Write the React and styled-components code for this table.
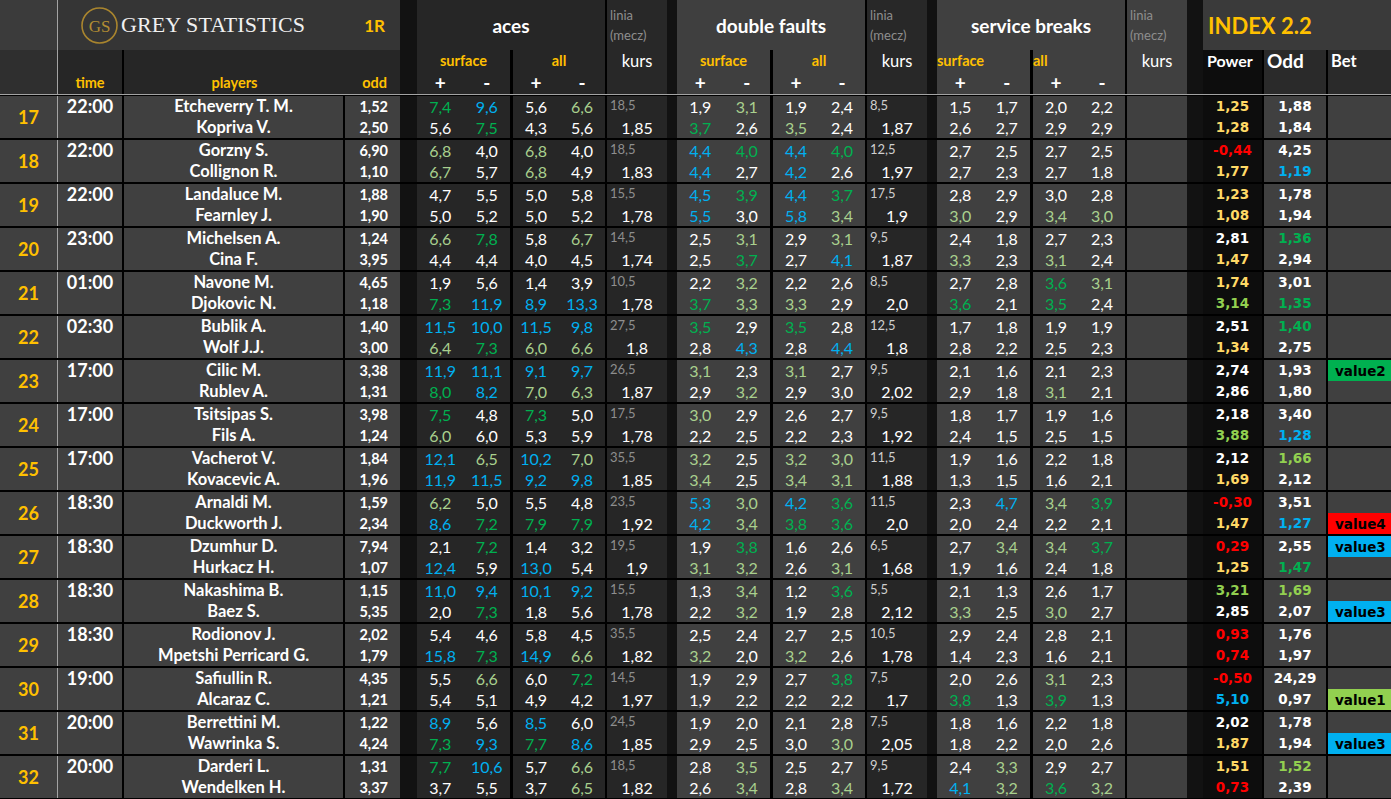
import React from 'react';
import styled, { createGlobalStyle } from 'styled-components';

const COLS =
  '58px 66px 221px 55px 17px 96px 94px 60px 10px 96px 94px 60px 10px 96px 94px 60px 16px 61px 64px 63px';

const C = {
  w: '#ffffff',
  g: '#00b050',
  l: '#a9d08e',
  b: '#00b0f0',
  y: '#ffd966',
  r: '#ff0000',
  m: '#92d050',
};

// "7,4g" -> { v: '7,4', c: green }
const parse = str =>
  str.split(' ').map(t => {
    const m = t.match(/^(-?[\d,]+)([a-z]?)$/);
    return { v: m[1], c: C[m[2] || 'w'] };
  });

const matches = [
  { n: 17, t: '22:00', p: ['Etcheverry T. M.', 'Kopriva V.'], o: ['1,52', '2,50'],
    a: ['7,4g 9,6b 5,6 6,6l', '5,6 7,5g 4,3 5,6'], al: ['18,5', '1,85'],
    d: ['1,9 3,1l 1,9 2,4', '3,7g 2,6 3,5l 2,4'], dl: ['8,5', '1,87'],
    s: ['1,5 1,7 2,0 2,2', '2,6 2,7 2,9 2,9'], pw: '1,25y 1,28y', od: '1,88 1,84' },
  { n: 18, t: '22:00', p: ['Gorzny S.', 'Collignon R.'], o: ['6,90', '1,10'],
    a: ['6,8l 4,0 6,8l 4,0', '6,7l 5,7 6,8l 4,9'], al: ['18,5', '1,83'],
    d: ['4,4b 4,0g 4,4b 4,0g', '4,4b 2,7 4,2b 2,6'], dl: ['12,5', '1,97'],
    s: ['2,7 2,5 2,7 2,5', '2,7 2,3 2,7 1,8'], pw: '-0,44r 1,77y', od: '4,25 1,19b' },
  { n: 19, t: '22:00', p: ['Landaluce M.', 'Fearnley J.'], o: ['1,88', '1,90'],
    a: ['4,7 5,5 5,0 5,8', '5,0 5,2 5,0 5,2'], al: ['15,5', '1,78'],
    d: ['4,5b 3,9g 4,4b 3,7g', '5,5b 3,0 5,8b 3,4l'], dl: ['17,5', '1,9'],
    s: ['2,8 2,9 3,0 2,8', '3,0l 2,9 3,4l 3,0l'], pw: '1,23y 1,08y', od: '1,78 1,94' },
  { n: 20, t: '23:00', p: ['Michelsen A.', 'Cina F.'], o: ['1,24', '3,95'],
    a: ['6,6l 7,8g 5,8 6,7l', '4,4 4,4 4,0 4,5'], al: ['14,5', '1,74'],
    d: ['2,5 3,1l 2,9 3,1l', '2,5 3,7g 2,7 4,1b'], dl: ['9,5', '1,87'],
    s: ['2,4 1,8 2,7 2,3', '3,3l 2,3 3,1l 2,4'], pw: '2,81 1,47y', od: '1,36g 2,94' },
  { n: 21, t: '01:00', p: ['Navone M.', 'Djokovic N.'], o: ['4,65', '1,18'],
    a: ['1,9 5,6 1,4 3,9', '7,3g 11,9b 8,9b 13,3b'], al: ['10,5', '1,78'],
    d: ['2,2 3,2l 2,2 2,6', '3,7g 3,3l 3,3l 2,9'], dl: ['8,5', '2,0'],
    s: ['2,7 2,8 3,6g 3,1l', '3,6g 2,1 3,5g 2,4'], pw: '1,74y 3,14m', od: '3,01 1,35g' },
  { n: 22, t: '02:30', p: ['Bublik A.', 'Wolf J.J.'], o: ['1,40', '3,00'],
    a: ['11,5b 10,0b 11,5b 9,8b', '6,4l 7,3g 6,0l 6,6l'], al: ['27,5', '1,8'],
    d: ['3,5g 2,9 3,5g 2,8', '2,8 4,3b 2,8 4,4b'], dl: ['12,5', '1,8'],
    s: ['1,7 1,8 1,9 1,9', '2,8 2,2 2,5 2,3'], pw: '2,51 1,34y', od: '1,40g 2,75' },
  { n: 23, t: '17:00', p: ['Cilic M.', 'Rublev A.'], o: ['3,38', '1,31'],
    a: ['11,9b 11,1b 9,1b 9,7b', '8,0g 8,2b 7,0l 6,3l'], al: ['26,5', '1,87'],
    d: ['3,1l 2,3 3,1l 2,7', '2,9 3,2l 2,9 3,0'], dl: ['9,5', '2,02'],
    s: ['2,1 1,6 2,1 2,3', '2,9 1,8 3,1l 2,1'], pw: '2,74 2,86', od: '1,93 1,80',
    bet: [['value2', '#00b050'], null] },
  { n: 24, t: '17:00', p: ['Tsitsipas S.', 'Fils A.'], o: ['3,98', '1,24'],
    a: ['7,5g 4,8 7,3g 5,0', '6,0l 6,0 5,3 5,9'], al: ['17,5', '1,78'],
    d: ['3,0l 2,9 2,6 2,7', '2,2 2,5 2,2 2,3'], dl: ['9,5', '1,92'],
    s: ['1,8 1,7 1,9 1,6', '2,4 1,5 2,5 1,5'], pw: '2,18 3,88m', od: '3,40 1,28b' },
  { n: 25, t: '17:00', p: ['Vacherot V.', 'Kovacevic A.'], o: ['1,84', '1,96'],
    a: ['12,1b 6,5l 10,2b 7,0l', '11,9b 11,5b 9,2b 9,8b'], al: ['35,5', '1,85'],
    d: ['3,2l 2,5 3,2l 3,0l', '3,4l 2,5 3,4l 3,1l'], dl: ['11,5', '1,88'],
    s: ['1,9 1,6 2,2 1,8', '1,3 1,5 1,6 2,1'], pw: '2,12 1,69y', od: '1,66m 2,12' },
  { n: 26, t: '18:30', p: ['Arnaldi M.', 'Duckworth J.'], o: ['1,59', '2,34'],
    a: ['6,2l 5,0 5,5 4,8', '8,6b 7,2g 7,9g 7,9g'], al: ['23,5', '1,92'],
    d: ['5,3b 3,0l 4,2b 3,6g', '4,2b 3,4l 3,8g 3,6g'], dl: ['11,5', '2,0'],
    s: ['2,3 4,7b 3,4l 3,9g', '2,0 2,4 2,2 2,1'], pw: '-0,30r 1,47y', od: '3,51 1,27b',
    bet: [null, ['value4', '#ff0000']] },
  { n: 27, t: '18:30', p: ['Dzumhur D.', 'Hurkacz H.'], o: ['7,94', '1,07'],
    a: ['2,1 7,2g 1,4 3,2', '12,4b 5,9 13,0b 5,4'], al: ['19,5', '1,9'],
    d: ['1,9 3,8g 1,6 2,6', '3,1l 3,2l 2,6 3,1l'], dl: ['6,5', '1,68'],
    s: ['2,7 3,4l 3,4l 3,7g', '1,9 1,6 2,4 1,8'], pw: '0,29r 1,25y', od: '2,55 1,47g',
    bet: [['value3', '#00b0f0'], null] },
  { n: 28, t: '18:30', p: ['Nakashima B.', 'Baez S.'], o: ['1,15', '5,35'],
    a: ['11,0b 9,4b 10,1b 9,2b', '2,0 7,3g 1,8 5,6'], al: ['15,5', '1,78'],
    d: ['1,3 3,4l 1,2 3,6g', '2,2 3,2l 1,9 2,8'], dl: ['5,5', '2,12'],
    s: ['2,1 1,3 2,6 1,7', '3,3l 2,5 3,0l 2,7'], pw: '3,21m 2,85', od: '1,69m 2,07',
    bet: [null, ['value3', '#00b0f0']] },
  { n: 29, t: '18:30', p: ['Rodionov J.', 'Mpetshi Perricard G.'], o: ['2,02', '1,79'],
    a: ['5,4 4,6 5,8 4,5', '15,8b 7,3g 14,9b 6,6l'], al: ['35,5', '1,82'],
    d: ['2,5 2,4 2,7 2,5', '3,2l 2,0 3,2l 2,6'], dl: ['10,5', '1,78'],
    s: ['2,9 2,4 2,8 2,1', '1,4 2,3 1,6 2,1'], pw: '0,93r 0,74r', od: '1,76 1,97' },
  { n: 30, t: '19:00', p: ['Safiullin R.', 'Alcaraz C.'], o: ['4,35', '1,21'],
    a: ['5,5 6,6l 6,0 7,2g', '5,4 5,1 4,9 4,2'], al: ['14,5', '1,97'],
    d: ['1,9 2,9 2,7 3,8g', '1,9 2,2 2,2 2,2'], dl: ['7,5', '1,7'],
    s: ['2,0 2,6 3,1l 2,3', '3,8g 1,3 3,9g 1,3'], pw: '-0,50r 5,10b', od: '24,29 0,97',
    bet: [null, ['value1', '#92d050']] },
  { n: 31, t: '20:00', p: ['Berrettini M.', 'Wawrinka S.'], o: ['1,22', '4,24'],
    a: ['8,9b 5,6 8,5b 6,0', '7,3g 9,3b 7,7g 8,6b'], al: ['24,5', '1,85'],
    d: ['1,9 2,0 2,1 2,8', '2,9 2,5 3,0 3,0l'], dl: ['7,5', '2,05'],
    s: ['1,8 1,6 2,2 1,8', '1,8 2,2 2,0 2,6'], pw: '2,02 1,87y', od: '1,78 1,94',
    bet: [null, ['value3', '#00b0f0']] },
  { n: 32, t: '20:00', p: ['Darderi L.', 'Wendelken H.'], o: ['1,31', '3,37'],
    a: ['7,7g 10,6b 5,7 6,6l', '3,7 5,5 3,7 6,5l'], al: ['18,5', '1,82'],
    d: ['2,8 3,5l 2,5 2,7', '2,6 3,4l 2,8 3,4l'], dl: ['9,5', '1,72'],
    s: ['2,4 3,3l 2,9 2,7', '4,1b 3,2l 3,6g 3,2l'], pw: '1,51y 0,73r', od: '1,52m 2,39' },
];

const GlobalStyle = createGlobalStyle`
  html, body {
    margin: 0;
    padding: 0;
    overflow: hidden;
    background: #000;
  }
`;

const Sheet = styled.div`
  width: 1391px;
  height: 799px;
  overflow: hidden;
  background: #000;
  font-family: Lato, 'Liberation Sans', sans-serif;
  color: #fff;
`;

/* ---------- header ---------- */

const HeadGrid = styled.div`
  display: grid;
  grid-template-columns: ${COLS};
  grid-template-rows: 50px 22px 22px;
  border-bottom: 1px solid #a3a3a3;
`;

const HeadCell = styled.div`
  grid-column: ${p => p.$col};
  grid-row: ${p => p.$row};
  background: ${p => p.$bg || '#262626'};
  display: flex;
  align-items: ${p => p.$v || 'center'};
  justify-content: ${p => p.$h || 'center'};
  padding: ${p => p.$pad || '0'};
  border-right: ${p => (p.$edge ? `${p.$edge}px solid #000` : 'none')};
  box-sizing: border-box;
  overflow: hidden;
  white-space: nowrap;
`;

const NumHead = styled(HeadCell)`
  border-right: 1px solid #a3a3a3;
`;

const LogoCell = styled(HeadCell)`
  justify-content: space-between;
  padding: 0 15px 0 23px;
`;

const Brand = styled.div`
  display: flex;
  align-items: center;
  gap: 3px;
`;

const BrandName = styled.span`
  font-family: 'Liberation Serif', 'DejaVu Serif', serif;
  font-size: 22px;
  letter-spacing: 0.1px;
  color: #f0f0f0;
`;

const Round = styled.span`
  font-size: 17px;
  font-weight: 700;
  color: #ffc000;
`;

const GroupTitle = styled.span`
  font-size: 19px;
  font-weight: 700;
  color: #fff;
`;

const IndexTitle = styled.span`
  font-size: 22px;
  font-weight: 700;
  color: #ffc000;
`;

const YellowLabel = styled.span`
  font-size: 14.5px;
  font-weight: 700;
  line-height: 22px;
  color: #ffc000;
`;

const WhiteLabel = styled.span`
  font-size: ${p => p.$size || 16}px;
  font-weight: 700;
  line-height: 22px;
  color: #fff;
`;

const Signs = styled.div`
  display: grid;
  grid-template-columns: 1fr 1fr;
  width: 100%;
  font-size: 19px;
  font-weight: 700;
  line-height: 22px;
  text-align: center;
  color: #fff;
`;

const LiniaHead = styled.div`
  grid-column: ${p => p.$col};
  grid-row: 1 / 4;
  background: ${p => p.$bg};
  display: flex;
  flex-direction: column;
  padding-top: 5px;
  box-sizing: border-box;
`;

const LiniaLabel = styled.span`
  font-size: 13px;
  line-height: 20px;
  padding-left: 3px;
  color: #8e8e8e;
`;

const Kurs = styled.span`
  margin-top: 5px;
  font-size: 16.5px;
  line-height: 22px;
  text-align: center;
  color: #fff;
`;

const Sep = styled.div`
  grid-column: ${p => p.$col};
  grid-row: 1 / 4;
  background: #121212;
`;

const Logo = () => (
  <svg width="37" height="37" viewBox="0 0 37 37">
    <circle cx="18.5" cy="18.5" r="17.5" fill="none" stroke="#a9852e" strokeWidth="1.6" />
    <text
      x="18.5"
      y="24.5"
      textAnchor="middle"
      fontFamily="Liberation Serif, serif"
      fontSize="17"
      fill="#b38d33"
    >
      GS
    </text>
  </svg>
);

const StatHead = ({ from, title, bg, leftLabels }) => (
  <>
    <HeadCell $col={`${from} / ${from + 2}`} $row="1" $bg={bg} $edge={2}>
      <GroupTitle>{title}</GroupTitle>
    </HeadCell>
    <HeadCell
      $col={from}
      $row="2"
      $bg={bg}
      $edge={3}
      $h={leftLabels ? 'flex-start' : 'center'}
    >
      <YellowLabel>surface</YellowLabel>
    </HeadCell>
    <HeadCell
      $col={from + 1}
      $row="2"
      $bg={bg}
      $edge={2}
      $h={leftLabels ? 'flex-start' : 'center'}
    >
      <YellowLabel>all</YellowLabel>
    </HeadCell>
    <HeadCell $col={from} $row="3" $bg={bg} $edge={3}>
      <Signs>
        <span>+</span>
        <span>-</span>
      </Signs>
    </HeadCell>
    <HeadCell $col={from + 1} $row="3" $bg={bg} $edge={2}>
      <Signs>
        <span>+</span>
        <span>-</span>
      </Signs>
    </HeadCell>
  </>
);

const Header = () => (
  <HeadGrid>
    <NumHead $col="1" $row="1" $bg="#3b3b3b" />
    <NumHead $col="1" $row="2 / 4" $bg="#2f2f2f" />
    <LogoCell $col="2 / 5" $row="1" $bg="#353535">
      <Brand>
        <Logo />
        <BrandName>GREY STATISTICS</BrandName>
      </Brand>
      <Round>1R</Round>
    </LogoCell>
    <HeadCell $col="2" $row="2 / 4" $v="flex-end" $edge={2}>
      <YellowLabel>time</YellowLabel>
    </HeadCell>
    <HeadCell $col="3" $row="2 / 4" $v="flex-end">
      <YellowLabel>players</YellowLabel>
    </HeadCell>
    <HeadCell $col="4" $row="2 / 4" $v="flex-end" $h="flex-end" $pad="0 13px 0 0">
      <YellowLabel>odd</YellowLabel>
    </HeadCell>
    <Sep $col="5" />

    <StatHead from={6} title="aces" bg="#262626" />
    <LiniaHead $col="8" $bg="#282828">
      <LiniaLabel>linia</LiniaLabel>
      <LiniaLabel>(mecz)</LiniaLabel>
      <Kurs>kurs</Kurs>
    </LiniaHead>
    <Sep $col="9" />

    <StatHead from={10} title="double faults" bg="#3f3f3f" />
    <LiniaHead $col="12" $bg="#282828">
      <LiniaLabel>linia</LiniaLabel>
      <LiniaLabel>(mecz)</LiniaLabel>
      <Kurs>kurs</Kurs>
    </LiniaHead>
    <Sep $col="13" />

    <StatHead from={14} title="service breaks" bg="#404040" leftLabels />
    <LiniaHead $col="16" $bg="#404040">
      <LiniaLabel>linia</LiniaLabel>
      <LiniaLabel>(mecz)</LiniaLabel>
      <Kurs>kurs</Kurs>
    </LiniaHead>
    <Sep $col="17" />

    <HeadCell $col="18 / 21" $row="1" $bg="#3a3a3a" $h="flex-start" $pad="0 0 0 5px">
      <IndexTitle>INDEX 2.2</IndexTitle>
    </HeadCell>
    <HeadCell $col="18" $row="2 / 4" $bg="#0d0d0d" $v="flex-start" $h="flex-start" $pad="0 0 0 4px" $edge={2}>
      <WhiteLabel>Power</WhiteLabel>
    </HeadCell>
    <HeadCell $col="19" $row="2 / 4" $bg="#2a2a2a" $v="flex-start" $h="flex-start" $pad="0 0 0 3px" $edge={2}>
      <WhiteLabel $size={19}>Odd</WhiteLabel>
    </HeadCell>
    <HeadCell $col="20" $row="2 / 4" $bg="#2a2a2a" $v="flex-start" $h="flex-start" $pad="0 0 0 3px">
      <WhiteLabel $size={16.5}>Bet</WhiteLabel>
    </HeadCell>
  </HeadGrid>
);

/* ---------- body ---------- */

const Body = styled.div`
  border-top: 1px solid #000;
`;

const MatchRow = styled.div`
  display: grid;
  grid-template-columns: ${COLS};
  height: 44px;
  box-sizing: border-box;
  border-bottom: 2px solid #000;
  background: #000;
`;

const NumCell = styled.div`
  background: #404040;
  border-right: 1px solid #a3a3a3;
  display: flex;
  align-items: center;
  justify-content: center;
  font-size: 18px;
  font-weight: 700;
  color: #ffc000;
`;

const TimeCell = styled.div`
  background: #404040;
  border-right: 2px solid #000;
  text-align: center;
  font-size: 18px;
  font-weight: 700;
  line-height: 21px;
  color: #fff;
`;

const TwoLines = styled.div`
  background: ${p => p.$bg || '#404040'};
  border-right: ${p => (p.$edge ? `${p.$edge}px solid #000` : 'none')};
  display: grid;
  grid-template-rows: 21px 21px;
  align-items: center;
  text-align: ${p => p.$align || 'center'};
  padding: ${p => p.$pad || '0'};
  font-family: ${p => (p.$wide ? "'DejaVu Sans', Verdana, sans-serif" : 'inherit')};
  font-size: ${p => p.$size || 16.5}px;
  font-weight: 700;
  line-height: 21px;
  white-space: nowrap;
`;

const Colored = styled.span`
  color: ${p => p.$c};
`;

const StatBlock = styled.div`
  display: grid;
  grid-template-columns: 1fr 1fr;
  grid-template-rows: 21px 21px;
  background: ${p => p.$bg};
  border-right: ${p => p.$edge}px solid #000;
`;

const Val = styled.span`
  text-align: center;
  font-size: 16px;
  line-height: 21px;
  color: ${p => p.$c};
`;

const LiniaCell = styled.div`
  background: ${p => p.$bg};
  display: grid;
  grid-template-rows: 21px 21px;
`;

const LineTop = styled.span`
  padding-left: 3px;
  font-size: 13px;
  line-height: 19px;
  color: ${p => p.$c};
`;

const LineKurs = styled.span`
  text-align: center;
  font-size: 16px;
  line-height: 21px;
  color: #fff;
`;

const Blank = styled.div`
  background: ${p => p.$bg};
`;

const BodySep = styled.div`
  background: #121212;
`;

const Badge = styled.span`
  display: block;
  height: 21px;
  padding-left: 7px;
  background: ${p => p.$bg};
  color: #000;
  font-family: 'DejaVu Sans', Verdana, sans-serif;
  font-size: 13.5px;
  font-weight: 700;
  line-height: 22px;
`;

const Stats = ({ rows, bg }) => {
  const [r1, r2] = rows.map(parse);
  return (
    <>
      <StatBlock $bg={bg} $edge={3}>
        {[r1[0], r1[1], r2[0], r2[1]].map((x, i) => (
          <Val key={i} $c={x.c}>{x.v}</Val>
        ))}
      </StatBlock>
      <StatBlock $bg={bg} $edge={2}>
        {[r1[2], r1[3], r2[2], r2[3]].map((x, i) => (
          <Val key={i} $c={x.c}>{x.v}</Val>
        ))}
      </StatBlock>
    </>
  );
};

const Linia = ({ line, bg, tone }) => (
  <LiniaCell $bg={bg}>
    <LineTop $c={tone}>{line[0]}</LineTop>
    <LineKurs>{line[1]}</LineKurs>
  </LiniaCell>
);

const Match = ({ m }) => {
  const power = parse(m.pw);
  const odds = parse(m.od);
  const bet = m.bet || [null, null];
  return (
    <MatchRow>
      <NumCell>{m.n}</NumCell>
      <TimeCell>{m.t}</TimeCell>
      <TwoLines $edge={2}>
        <span>{m.p[0]}</span>
        <span>{m.p[1]}</span>
      </TwoLines>
      <TwoLines $align="right" $pad="0 12px 0 0" $size={14.5}>
        <span>{m.o[0]}</span>
        <span>{m.o[1]}</span>
      </TwoLines>
      <BodySep />

      <Stats rows={m.a} bg="#262626" />
      <Linia line={m.al} bg="#262626" tone="#8e8e8e" />
      <BodySep />

      <Stats rows={m.d} bg="#404040" />
      <Linia line={m.dl} bg="#262626" tone="#cfcfcf" />
      <BodySep />

      <Stats rows={m.s} bg="#404040" />
      <Blank $bg="#404040" />
      <BodySep />

      <TwoLines $bg="#0d0d0d" $edge={2} $wide $size={13.5}>
        {power.map((x, i) => (
          <Colored key={i} $c={x.c}>{x.v}</Colored>
        ))}
      </TwoLines>
      <TwoLines $edge={2} $wide $size={13.5}>
        {odds.map((x, i) => (
          <Colored key={i} $c={x.c}>{x.v}</Colored>
        ))}
      </TwoLines>
      <TwoLines $align="left">
        {bet.map((b, i) =>
          b ? <Badge key={i} $bg={b[1]}>{b[0]}</Badge> : <span key={i} />
        )}
      </TwoLines>
    </MatchRow>
  );
};

export default function App() {
  return (
    <Sheet>
      <GlobalStyle />
      <Header />
      <Body>
        {matches.map(m => (
          <Match key={m.n} m={m} />
        ))}
      </Body>
    </Sheet>
  );
}
